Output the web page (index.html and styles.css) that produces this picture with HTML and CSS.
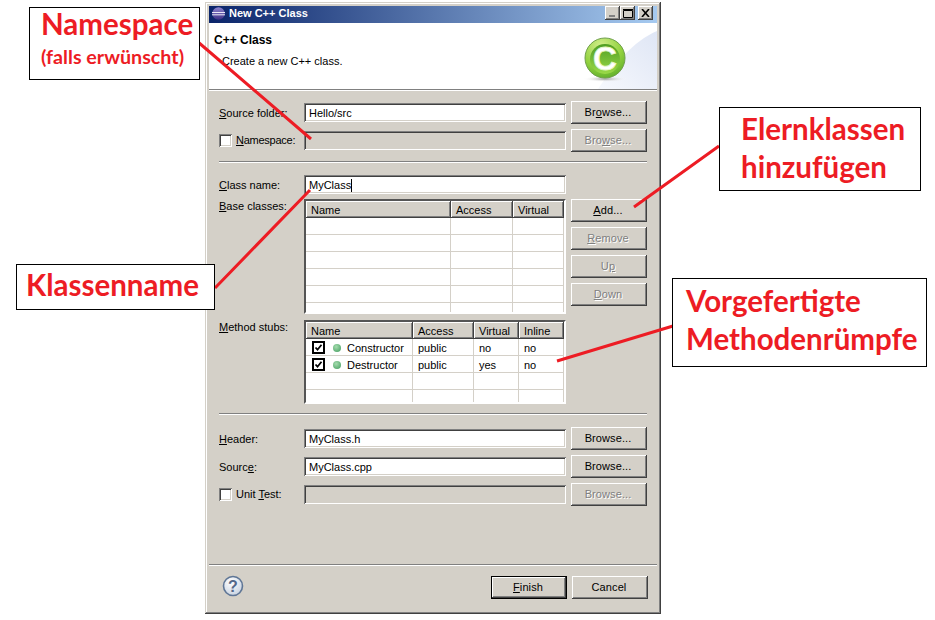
FILE: index.html
```html
<!DOCTYPE html>
<html lang="de">
<head>
  <meta charset="UTF-8">
  <title>New C++ Class</title>
  <link rel="stylesheet" href="styles.css">
</head>
<body>
  <div class="dialog">
    <div class="titlebar">
      <svg class="app-icon" width="13" height="13" viewBox="0 0 13 13">
        <defs>
          <linearGradient id="eclipse" x1="0" y1="0" x2="0" y2="1">
            <stop offset="0" stop-color="#8f86d0"/>
            <stop offset="1" stop-color="#3b2f86"/>
          </linearGradient>
        </defs>
        <circle cx="6.5" cy="6.5" r="6.2" fill="url(#eclipse)"/>
        <path d="M0 5.5h13M0 7.8h13" stroke="#e8e8f6" stroke-width="1"/>
      </svg>
      <span class="title-text">New C++ Class</span>
      <div class="win-buttons">
        <span class="win-btn"><svg width="8" height="8" viewBox="0 0 8 8"><path d="M0 7h6" stroke="#808080" stroke-width="2"/></svg></span>
        <span class="win-btn"><svg width="10" height="9" viewBox="0 0 10 9"><path d="M.5 1.5h9v7h-9z" fill="none" stroke="#000"/><path d="M0 .5h10" stroke="#000"/></svg></span>
        <span class="win-btn win-close"><svg width="9" height="8" viewBox="0 0 9 8"><path d="M1 0l7 8M8 0l-7 8" stroke="#000" stroke-width="1.6"/></svg></span>
      </div>
    </div>

    <div class="banner">
      <div class="banner-text">
        <div class="banner-title">C++ Class</div>
        <div class="banner-sub">Create a new C++ class.</div>
      </div>
      <svg class="banner-art" width="100" height="66" viewBox="0 0 100 66">
        <defs>
          <linearGradient id="swoosh" x1="0" y1="1" x2="1" y2="0">
            <stop offset="0" stop-color="#f6f8fd"/>
            <stop offset="1" stop-color="#dfe6f5"/>
          </linearGradient>
          <radialGradient id="ball" cx="0.4" cy="0.2" r="0.85">
            <stop offset="0" stop-color="#d3ee8c"/>
            <stop offset="0.6" stop-color="#93d23f"/>
            <stop offset="1" stop-color="#5fae2a"/>
          </radialGradient>
          <linearGradient id="core" x1="0" y1="0" x2="0" y2="1">
            <stop offset="0" stop-color="#4f9e22"/>
            <stop offset="1" stop-color="#9ad948"/>
          </linearGradient>
          <radialGradient id="shade" cx="0.5" cy="0.5" r="0.5">
            <stop offset="0" stop-color="#9a9a9a"/>
            <stop offset="1" stop-color="#fff" stop-opacity="0"/>
          </radialGradient>
        </defs>
        <path d="M41 66C57 42 76 18 100 8V66z" fill="url(#swoosh)"/>
        <ellipse cx="48" cy="56" rx="22" ry="3" fill="url(#shade)"/>
        <circle cx="48" cy="35" r="20" fill="url(#ball)" stroke="#6f9f4c" stroke-width="1"/>
        <circle cx="48" cy="36" r="15" fill="url(#core)"/>
        <text class="ball-letter" x="48" y="47" text-anchor="middle">C</text>
      </svg>
    </div>
    <div class="divider"></div>

    <div class="form">
      <div class="row">
        <label class="row-label"><u>S</u>ource folder:</label>
        <div class="field">Hello/src</div>
        <button class="btn">Br<u>o</u>wse...</button>
      </div>
      <div class="row">
        <label class="row-label check-label"><span class="check"></span><span class="ns-text"><u>N</u>amespace:</span></label>
        <div class="field field-off"></div>
        <button class="btn btn-off">Bro<u>w</u>se...</button>
      </div>

      <div class="divider divider-form"></div>

      <div class="row row-class">
        <label class="row-label"><u>C</u>lass name:</label>
        <div class="field"><span class="caret">MyClass</span></div>
      </div>

      <div class="block block-base">
        <label class="row-label block-label"><u>B</u>ase classes:</label>
        <div class="grid-frame grid-base">
          <table class="grid">
            <colgroup><col class="c-145"><col class="c-62"><col class="c-51"></colgroup>
            <tr><th>Name</th><th>Access</th><th>Virtual</th></tr>
            <tr><td></td><td></td><td></td></tr>
            <tr><td></td><td></td><td></td></tr>
            <tr><td></td><td></td><td></td></tr>
            <tr><td></td><td></td><td></td></tr>
            <tr><td></td><td></td><td></td></tr>
            <tr><td></td><td></td><td></td></tr>
          </table>
        </div>
        <div class="side-buttons">
          <button class="btn"><u>A</u>dd...</button>
          <button class="btn btn-off"><u>R</u>emove</button>
          <button class="btn btn-off">U<u>p</u></button>
          <button class="btn btn-off"><u>D</u>own</button>
        </div>
      </div>

      <div class="block block-stubs">
        <label class="row-label block-label"><u>M</u>ethod stubs:</label>
        <div class="grid-frame grid-stubs">
          <table class="grid">
            <colgroup><col class="c-107"><col class="c-61"><col class="c-45"><col class="c-45"></colgroup>
            <tr><th>Name</th><th>Access</th><th>Virtual</th><th>Inline</th></tr>
            <tr>
              <td><div class="stub">
                <svg class="stub-check" width="13" height="13" viewBox="0 0 13 13"><rect x="1" y="1" width="11" height="11" fill="#fff" stroke="#000" stroke-width="2"/><path d="M3.5 6.5l2 2.2 4-5" fill="none" stroke="#000" stroke-width="1.8"/></svg>
                <span class="dot"></span>Constructor
              </div></td>
              <td>public</td><td>no</td><td>no</td>
            </tr>
            <tr>
              <td><div class="stub">
                <svg class="stub-check" width="13" height="13" viewBox="0 0 13 13"><rect x="1" y="1" width="11" height="11" fill="#fff" stroke="#000" stroke-width="2"/><path d="M3.5 6.5l2 2.2 4-5" fill="none" stroke="#000" stroke-width="1.8"/></svg>
                <span class="dot"></span>Destructor
              </div></td>
              <td>public</td><td>yes</td><td>no</td>
            </tr>
            <tr><td></td><td></td><td></td><td></td></tr>
            <tr><td></td><td></td><td></td><td></td></tr>
          </table>
        </div>
      </div>

      <div class="divider divider-form"></div>

      <div class="row row-header">
        <label class="row-label"><u>H</u>eader:</label>
        <div class="field">MyClass.h</div>
        <button class="btn">Browse...</button>
      </div>
      <div class="row">
        <label class="row-label">Sourc<u>e</u>:</label>
        <div class="field">MyClass.cpp</div>
        <button class="btn">Browse...</button>
      </div>
      <div class="row">
        <label class="row-label check-label"><span class="check"></span><span>Unit <u>T</u>est:</span></label>
        <div class="field field-off"></div>
        <button class="btn btn-off">Browse...</button>
      </div>
    </div>

    <div class="divider"></div>

    <div class="footer">
      <svg class="help" width="22" height="22" viewBox="0 0 22 22">
        <defs>
          <radialGradient id="helpfill" cx="0.4" cy="0.3" r="0.8">
            <stop offset="0" stop-color="#fff"/>
            <stop offset="1" stop-color="#c3cede"/>
          </radialGradient>
        </defs>
        <circle cx="11" cy="11" r="9.5" fill="url(#helpfill)" stroke="#5f7696" stroke-width="1.6"/>
        <text class="help-mark" x="11" y="16.5" text-anchor="middle">?</text>
      </svg>
      <button class="btn btn-default"><u>F</u>inish</button>
      <button class="btn btn-cancel">Cancel</button>
    </div>
  </div>

  <svg class="arrows" width="935" height="620" viewBox="0 0 935 620">
    <path d="M198 42L311 139M215 288L310 190M719 146L634 207M673 326L557 361"/>
  </svg>

  <div class="note note-namespace">
    <div class="note-big">Namespace</div>
    <div class="note-small">(falls erwünscht)</div>
  </div>
  <div class="note note-base">Elernklassen<br>hinzufügen</div>
  <div class="note note-class">Klassenname</div>
  <div class="note note-stubs">Vorgefertigte<br>Methodenrümpfe</div>
</body>
</html>
```

FILE: styles.css
```css
html, body {
  margin: 0;
  padding: 0;
  background: #fff;
  height: 620px;
  overflow: hidden;
}
body {
  position: relative;
  font-family: "Liberation Sans", Arial, sans-serif;
  font-size: 11px;
  color: #000;
}

/* window */
.dialog {
  box-sizing: border-box;
  width: 456px;
  height: 612px;
  margin: 2px 0 0 205px;
  padding: 4px;
  display: flex;
  flex-direction: column;
  background: #d4d0c8;
  box-shadow: inset -1px -1px #404040, inset 1px 1px #d4d0c8, inset -2px -2px #808080, inset 2px 2px #fff;
}
.titlebar {
  flex: none;
  box-sizing: border-box;
  height: 17px;
  display: flex;
  align-items: flex-start;
  padding: 0 4px 0 3px;
  background: linear-gradient(to right, #0a246a, #a6caf0);
}
.app-icon {
  flex: none;
  margin-top: 1px;
}
.title-text {
  margin-left: 4px;
  line-height: 14px;
  color: #fff;
  font-weight: bold;
}
.win-buttons {
  margin-left: auto;
  display: flex;
}
.win-btn {
  box-sizing: border-box;
  width: 15px;
  height: 14px;
  display: flex;
  align-items: center;
  justify-content: center;
  background: #d4d0c8;
  box-shadow: inset -1px -1px #404040, inset 1px 1px #fff, inset -2px -2px #808080;
}
.win-close {
  margin-left: 3px;
}

/* banner */
.banner {
  flex: none;
  height: 66px;
  display: flex;
  justify-content: space-between;
  background: #fff;
}
.banner-text {
  padding: 10px 0 0 5px;
}
.banner-title {
  font-size: 12px;
  font-weight: bold;
  line-height: 14px;
}
.banner-sub {
  margin: 7px 0 0 8px;
  line-height: 14px;
}
.ball-letter {
  font-family: "Liberation Sans", Arial, sans-serif;
  font-size: 33px;
  font-weight: bold;
  fill: #fff;
  stroke: #e4f5c4;
  stroke-width: 0.8;
}
.divider {
  flex: none;
  height: 2px;
  box-sizing: border-box;
  border-top: 1px solid #808080;
  border-bottom: 1px solid #fff;
}
.divider-form {
  margin: 9px 0;
}

/* form */
.form {
  flex: 1;
  padding: 10px 10px 0;
}
.row {
  display: flex;
  align-items: center;
  height: 23px;
  margin-bottom: 5px;
}
.row-class {
  margin: 10px 0 3px;
}
.row-header {
  margin-top: 12px;
}
.row-label {
  flex: none;
  width: 85px;
}
.check-label {
  display: flex;
  align-items: center;
  gap: 4px;
}
.check-label > span:last-child {
  margin-bottom: 2px;
}
.ns-text {
  letter-spacing: -0.25px;
}
.check {
  flex: none;
  box-sizing: border-box;
  width: 13px;
  height: 13px;
  background: #fff;
  box-shadow: inset 1px 1px #808080, inset -1px -1px #fff, inset 2px 2px #404040, inset -2px -2px #d4d0c8;
}
.field {
  box-sizing: border-box;
  flex: none;
  width: 262px;
  height: 19px;
  padding-left: 5px;
  line-height: 21px;
  background: #fff;
  box-shadow: inset 1px 1px #808080, inset -1px -1px #fff, inset 2px 2px #404040, inset -2px -2px #d4d0c8;
}
.field-off {
  background: #d4d0c8;
}
.caret {
  display: inline-block;
  line-height: 13px;
  border-right: 1px solid #000;
}
.btn {
  flex: none;
  box-sizing: border-box;
  width: 76px;
  height: 23px;
  margin: 0 0 0 5px;
  padding: 0 2px 2px 0;
  border: none;
  font: inherit;
  letter-spacing: 0.1px;
  color: #000;
  background: #d4d0c8;
  box-shadow: inset -1px -1px #404040, inset 1px 1px #fff, inset -2px -2px #808080;
}
.btn-off {
  color: #808080;
  text-shadow: 1px 1px #fff;
}
.btn-default {
  margin-left: auto;
  outline: 1px solid #000;
  outline-offset: -1px;
  box-shadow: inset -2px -2px #404040, inset 2px 2px #fff, inset -3px -3px #808080;
}
.btn-cancel {
  margin-right: -1px;
}

/* tables */
.block {
  display: flex;
  align-items: flex-start;
}
.block-stubs {
  margin-top: 6px;
}
.block-label {
  padding-top: 1px;
  line-height: 13px;
}
.grid-frame {
  box-sizing: border-box;
  flex: none;
  width: 262px;
  overflow: hidden;
  background: #fff;
  border: 2px solid;
  border-color: #555 #fff #fff #555;
}
.grid-base {
  height: 115px;
}
.grid-stubs {
  height: 84px;
}
.grid {
  width: 258px;
  table-layout: fixed;
  border-collapse: separate;
  border-spacing: 0;
}
.c-145 { width: 145px; }
.c-62 { width: 62px; }
.c-51 { width: 51px; }
.c-107 { width: 107px; }
.c-61 { width: 61px; }
.c-45 { width: 45px; }
.grid th {
  box-sizing: border-box;
  height: 17px;
  padding: 1px 0 0 5px;
  font-weight: normal;
  text-align: left;
  background: #d4d0c8;
  box-shadow: inset -1px -1px #404040, inset 1px 1px #fff, inset -2px -2px #808080;
}
.grid td {
  box-sizing: border-box;
  height: 17px;
  padding: 1px 0 0 5px;
  border-right: 1px solid #d4d0c8;
  border-bottom: 1px solid #d4d0c8;
}
.stub {
  display: flex;
  align-items: center;
  padding-left: 1px;
}
.stub-check {
  flex: none;
}
.dot {
  flex: none;
  width: 8px;
  height: 8px;
  margin: 0 6px 0 8px;
  border-radius: 50%;
  background: radial-gradient(circle at 40% 35%, #a5dcae, #3f9a5c);
}
.side-buttons {
  display: flex;
  flex-direction: column;
  gap: 5px;
}

/* footer */
.footer {
  flex: none;
  height: 34px;
  padding: 10px 10px 0 13px;
  display: flex;
  align-items: flex-start;
}
.help {
  flex: none;
  margin-top: -1px;
}
.help-mark {
  font-family: "Liberation Sans", Arial, sans-serif;
  font-size: 16px;
  font-weight: bold;
  fill: #54688a;
}

/* annotations on top of the screenshot */
.arrows {
  position: absolute;
  left: 0;
  top: 0;
}
.arrows path {
  fill: none;
  stroke: #ed1c24;
  stroke-width: 3;
}
.note {
  position: absolute;
  box-sizing: border-box;
  background: #fff;
  border: 1px solid #000;
  font-family: Lato, "Liberation Sans", sans-serif;
  font-weight: bold;
  font-size: 29.5px;
  line-height: 38px;
  color: #ed1c24;
}
.note-namespace {
  left: 29px;
  top: 7px;
  width: 171px;
  height: 73px;
  padding: 0 0 0 11px;
}
.note-big {
  height: 36px;
  line-height: 32px;
}
.note-small {
  font-size: 19.7px;
  line-height: 26px;
}
.note-base {
  left: 719px;
  top: 107px;
  width: 202px;
  height: 84px;
  padding: 2px 0 0 21px;
}
.note-class {
  left: 16px;
  top: 264px;
  width: 199px;
  height: 46px;
  padding: 1px 0 0 9px;
}
.note-stubs {
  left: 672px;
  top: 278px;
  width: 255px;
  height: 89px;
  padding: 3px 0 0 13px;
}
```
